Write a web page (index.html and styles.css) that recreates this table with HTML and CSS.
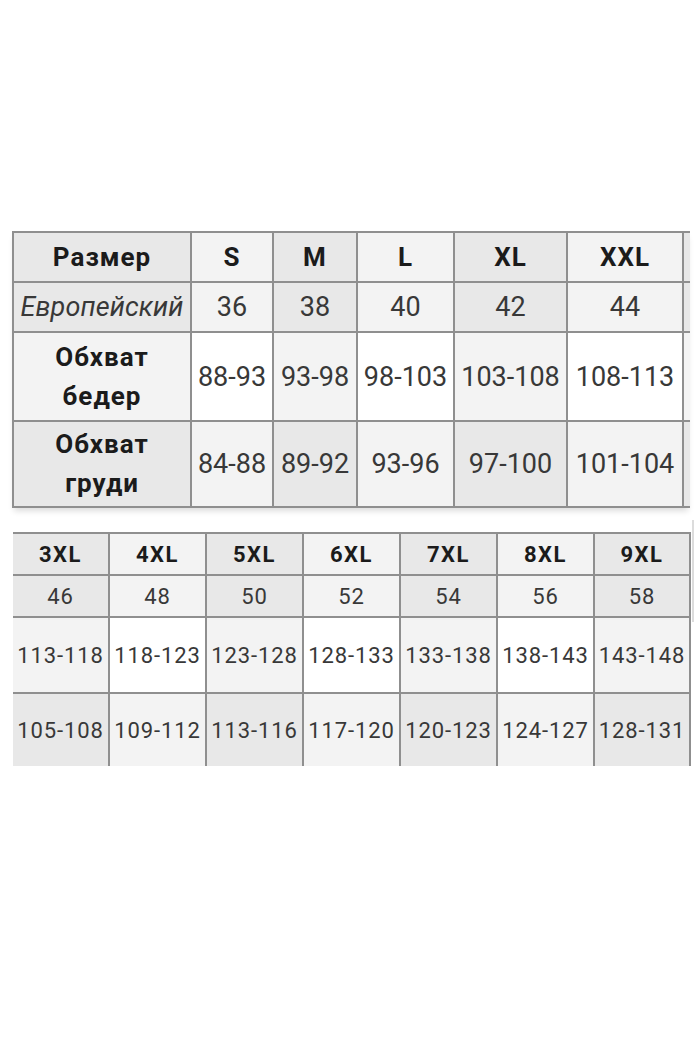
FILE: index.html
```html
<!DOCTYPE html>
<html lang="ru">
<head>
<meta charset="utf-8">
<title>Таблица размеров</title>
<link rel="stylesheet" href="styles.css">
</head>
<body>
<div class="page">
  <div class="t1wrap">
    <table class="chart chart1">
      <colgroup>
        <col class="c-label"><col class="c-s"><col class="c-m"><col class="c-l"><col class="c-xl"><col class="c-xxl"><col class="c-more">
      </colgroup>
      <tr class="r-head">
        <td class="dk lbl">Размер</td>
        <td class="lt lbl">S</td>
        <td class="dk lbl">M</td>
        <td class="lt lbl">L</td>
        <td class="dk lbl">XL</td>
        <td class="lt lbl">XXL</td>
        <td class="dk"></td>
      </tr>
      <tr class="r-eu">
        <td class="dk eu">Европейский</td>
        <td class="lt">36</td>
        <td class="dk">38</td>
        <td class="lt">40</td>
        <td class="dk">42</td>
        <td class="lt">44</td>
        <td class="dk"></td>
      </tr>
      <tr class="r-hip">
        <td class="lt lbl two">Обхват<br>бедер</td>
        <td class="wh">88-93</td>
        <td class="lt">93-98</td>
        <td class="wh">98-103</td>
        <td class="lt">103-108</td>
        <td class="wh">108-113</td>
        <td class="lt"></td>
      </tr>
      <tr class="r-chest">
        <td class="dk lbl two">Обхват<br>груди</td>
        <td class="lt">84-88</td>
        <td class="dk">89-92</td>
        <td class="lt">93-96</td>
        <td class="dk">97-100</td>
        <td class="lt">101-104</td>
        <td class="dk"></td>
      </tr>
    </table>
  </div>

  <div class="t2wrap">
    <table class="chart chart2">
      <colgroup>
        <col class="c2"><col class="c2"><col class="c2"><col class="c2"><col class="c2"><col class="c2"><col class="c2-last">
      </colgroup>
      <tr class="r2-head">
        <td class="dk lbl">3XL</td>
        <td class="lt lbl">4XL</td>
        <td class="dk lbl">5XL</td>
        <td class="lt lbl">6XL</td>
        <td class="dk lbl">7XL</td>
        <td class="lt lbl">8XL</td>
        <td class="dk lbl">9XL</td>
      </tr>
      <tr class="r2-eu">
        <td class="dk">46</td>
        <td class="lt">48</td>
        <td class="dk">50</td>
        <td class="lt">52</td>
        <td class="dk">54</td>
        <td class="lt">56</td>
        <td class="dk">58</td>
      </tr>
      <tr class="r2-hip">
        <td class="lt">113-118</td>
        <td class="wh">118-123</td>
        <td class="lt">123-128</td>
        <td class="wh">128-133</td>
        <td class="lt">133-138</td>
        <td class="wh">138-143</td>
        <td class="lt">143-148</td>
      </tr>
      <tr class="r2-chest">
        <td class="dk">105-108</td>
        <td class="lt">109-112</td>
        <td class="dk">113-116</td>
        <td class="lt">117-120</td>
        <td class="dk">120-123</td>
        <td class="lt">124-127</td>
        <td class="dk">128-131</td>
      </tr>
    </table>
  </div>
</div>
</body>
</html>
```
FILE: styles.css
```css
html, body {
  margin: 0;
  padding: 0;
  background: #ffffff;
}

body {
  font-family: Roboto, "Noto Sans", "Liberation Sans", sans-serif;
  color: #383838;
}

.page {
  padding-top: 231px;
}

.chart {
  border-collapse: separate;
  border-spacing: 0;
  table-layout: fixed;
}

.chart td {
  box-sizing: border-box;
  padding: 0;
  text-align: center;
  vertical-align: middle;
  white-space: nowrap;
  border-right: 2px solid #8f8f8f;
  border-bottom: 2px solid #8f8f8f;
}

.dk { background: #e8e8e8; }
.lt { background: #f3f3f3; }
.wh { background: #ffffff; }

.lbl {
  font-weight: 700;
  color: #1b1b1b;
}

/* ---------- first table ---------- */
.t1wrap {
  margin-left: 12px;
  width: 678px;
  overflow: hidden;
  box-shadow: 0 5px 6px -2px rgba(0, 0, 0, 0.14);
}

.chart1 {
  width: 752px;
  border-top: 2px solid #8f8f8f;
  border-left: 2px solid #8f8f8f;
  font-size: 27px;
}

.chart1 .c-label { width: 178px; }
.chart1 .c-s { width: 82px; }
.chart1 .c-m { width: 84px; }
.chart1 .c-l { width: 97px; }
.chart1 .c-xl { width: 113px; }
.chart1 .c-xxl { width: 116px; }
.chart1 .c-more { width: 80px; }

.chart1 .lbl {
  font-size: 26px;
  letter-spacing: 1px;
}

.chart1 .r-head td { height: 50px; }
.chart1 .r-eu td { height: 50px; }
.chart1 .r-hip td { height: 89px; }
.chart1 .r-chest td { height: 86px; }

.chart1 .two {
  line-height: 39px;
  white-space: normal;
}

.chart1 .eu {
  font-style: italic;
  font-size: 27px;
  letter-spacing: 0.1px;
}

/* ---------- second table ---------- */
.t2wrap {
  position: relative;
  margin-top: 24px;
  margin-left: 13px;
  width: 678px;
}

.t2wrap::after {
  content: "";
  position: absolute;
  top: -12px;
  left: 679px;
  width: 2px;
  height: 102px;
  background: #dcdcdc;
}

.chart2 {
  width: 678px;
  border-top: 2px solid #8f8f8f;
  font-size: 22px;
  letter-spacing: 0.9px;
}

.chart2 .c2 { width: 97px; }
.chart2 .c2-last { width: 96px; }

.chart2 .lbl {
  font-size: 22px;
  letter-spacing: 1.5px;
}

.chart2 .r2-head td { height: 42px; }
.chart2 .r2-eu td { height: 42px; }
.chart2 .r2-hip td { height: 76px; }
.chart2 .r2-chest td {
  height: 72px;
  border-bottom: none;
}
```
